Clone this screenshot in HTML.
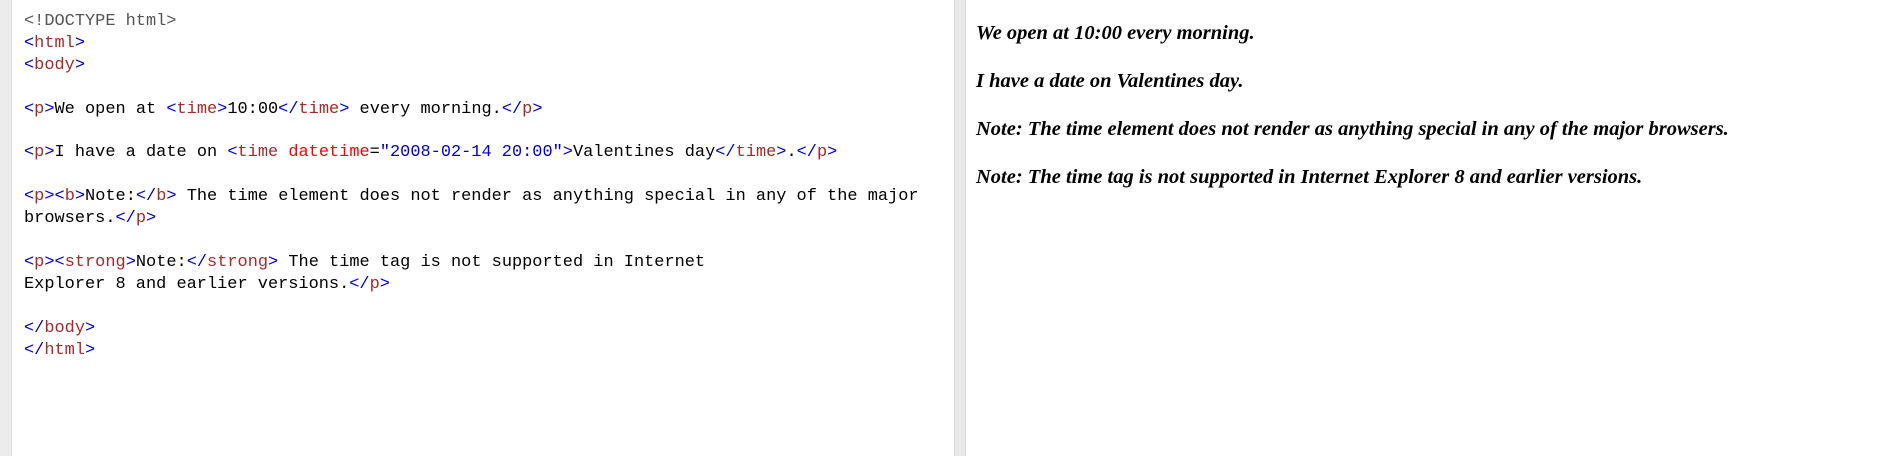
<!DOCTYPE html>
<html><head><style>
body{margin:0;width:1893px;height:456px;background:#fff;position:relative;overflow:hidden}
#lb{position:absolute;left:0;top:0;width:11px;height:456px;background:#ececec;border-right:1px solid #ddd}
#div{position:absolute;left:954px;top:0;width:10px;height:456px;background:#e8e8e8;border-left:1px solid #d8d8d8;border-right:1px solid #d8d8d8}
pre{position:absolute;left:24px;top:11px;margin:0;font-family:"Liberation Mono",monospace;font-size:16.95px;line-height:21.9px;color:#000}
.t{color:#a52a2a}.b{color:#0000cd}.a{color:#f00}.d{color:#555}
#r{position:absolute;left:976px;top:21px;font-family:"Liberation Serif",serif;font-style:italic;font-weight:bold;font-size:20.5px}
#r p{margin:0 0 24px 0;line-height:24px}
</style></head><body>
<div id="lb"></div><div id="div"></div>
<pre><span class="d">&lt;!DOCTYPE html&gt;</span>
<span class="b">&lt;</span><span class="t">html</span><span class="b">&gt;</span>
<span class="b">&lt;</span><span class="t">body</span><span class="b">&gt;</span>

<span class="b">&lt;</span><span class="t">p</span><span class="b">&gt;</span>We open at <span class="b">&lt;</span><span class="t">time</span><span class="b">&gt;</span>10:00<span class="b">&lt;/</span><span class="t">time</span><span class="b">&gt;</span> every morning.<span class="b">&lt;/</span><span class="t">p</span><span class="b">&gt;</span>

<span class="b">&lt;</span><span class="t">p</span><span class="b">&gt;</span>I have a date on <span class="b">&lt;</span><span class="t">time</span> <span class="a">datetime</span>=<span class="b">"2008-02-14 20:00"&gt;</span>Valentines day<span class="b">&lt;/</span><span class="t">time</span><span class="b">&gt;</span>.<span class="b">&lt;/</span><span class="t">p</span><span class="b">&gt;</span>

<span class="b">&lt;</span><span class="t">p</span><span class="b">&gt;&lt;</span><span class="t">b</span><span class="b">&gt;</span>Note:<span class="b">&lt;/</span><span class="t">b</span><span class="b">&gt;</span> The time element does not render as anything special in any of the major
browsers.<span class="b">&lt;/</span><span class="t">p</span><span class="b">&gt;</span>

<span class="b">&lt;</span><span class="t">p</span><span class="b">&gt;&lt;</span><span class="t">strong</span><span class="b">&gt;</span>Note:<span class="b">&lt;/</span><span class="t">strong</span><span class="b">&gt;</span> The time tag is not supported in Internet
Explorer 8 and earlier versions.<span class="b">&lt;/</span><span class="t">p</span><span class="b">&gt;</span>

<span class="b">&lt;/</span><span class="t">body</span><span class="b">&gt;</span>
<span class="b">&lt;/</span><span class="t">html</span><span class="b">&gt;</span></pre>
<div id="r">
<p>We open at 10:00 every morning.</p>
<p>I have a date on Valentines day.</p>
<p>Note: The time element does not render as anything special in any of the major browsers.</p>
<p>Note: The time tag is not supported in Internet Explorer 8 and earlier versions.</p>
</div>
</body></html>
